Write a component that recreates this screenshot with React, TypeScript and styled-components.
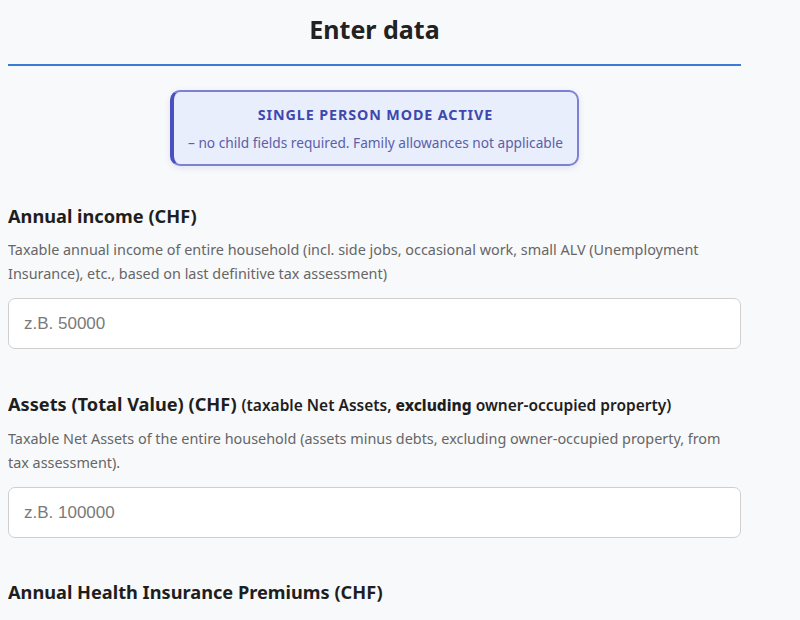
import React from "react";
import styled, { createGlobalStyle } from "styled-components";

const Global = createGlobalStyle`
  html, body { margin: 0; padding: 0; background: #f8f9fb; }
  body { font-family: "Noto Sans", "Open Sans", sans-serif; color: #222; overflow: hidden; }
`;

const Page = styled.div`
  width: 733px;
  margin-left: 8px;
  height: 620px;
  overflow: hidden;
`;

const Title = styled.h2`
  margin: 0;
  padding-top: 11px;
  text-align: center;
  font-size: 25px;
  font-weight: 700;
  color: #222;
  border-bottom: 2px solid #3a7bd5;
  line-height: 36px;
  box-sizing: border-box;
  height: 66px;
`;

const NoticeWrap = styled.div`
  display: flex;
  justify-content: center;
  margin-top: 24px;
`;

const Notice = styled.div`
  width: 409px;
  box-sizing: border-box;
  height: 76px;
  background: #e9eefd;
  border: 2px solid #7d81d2;
  border-left: 4px solid #4b50c0;
  border-radius: 10px;
  display: flex;
  flex-direction: column;
  align-items: center;
  justify-content: center;
  gap: 9px;
  box-shadow: 0 2px 6px rgba(60, 70, 160, 0.12);
`;

const NoticeTitle = styled.div`
  font-size: 14.3px;
  font-weight: 700;
  letter-spacing: 0.9px;
  color: #3e48ad;
`;

const NoticeText = styled.div`
  font-size: 13.7px;
  color: #5b60a8;
`;

const Field = styled.div<{ $top: number }>`
  margin-top: ${(p) => p.$top}px;
`;

const Label = styled.div`
  font-size: 18.2px;
  font-weight: 700;
  color: #1e1e1e;
  line-height: 24px;
`;

const LabelNote = styled.span`
  font-size: 15.5px;
  font-weight: 600;
`;

const LabelStrong = styled.b`
  font-weight: 800;
`;

const Desc = styled.div`
  margin-top: 10px;
  max-width: 725px;
  font-size: 14.4px;
  line-height: 24px;
  color: #666;
`;

const Input = styled.input`
  display: block;
  box-sizing: border-box;
  width: 100%;
  height: 51px;
  margin-top: 12px;
  border: 1.5px solid #cfcfcf;
  border-radius: 7px;
  background: #fff;
  padding: 0 15px;
  font-family: "Liberation Sans", Arial, sans-serif;
  font-size: 17px;
  color: #333;
  outline: none;
  &::placeholder { color: #7a7a7a; }
`;

export default function App() {
  return (
    <>
      <Global />
      <Page>
        <Title>Enter data</Title>
        <NoticeWrap>
          <Notice>
            <NoticeTitle>SINGLE PERSON MODE ACTIVE</NoticeTitle>
            <NoticeText>– no child fields required. Family allowances not applicable</NoticeText>
          </Notice>
        </NoticeWrap>
        <Field $top={38}>
          <Label>Annual income (CHF)</Label>
          <Desc>
            Taxable annual income of entire household (incl. side jobs, occasional work, small ALV (Unemployment
            Insurance), etc., based on last definitive tax assessment)
          </Desc>
          <Input placeholder="z.B. 50000" />
        </Field>
        <Field $top={43}>
          <Label>
            Assets (Total Value) (CHF){" "}
            <LabelNote>
              (taxable Net Assets, <LabelStrong>excluding</LabelStrong> owner-occupied property)
            </LabelNote>
          </Label>
          <Desc>
            Taxable Net Assets of the entire household (assets minus debts, excluding owner-occupied property, from
            tax assessment).
          </Desc>
          <Input placeholder="z.B. 100000" />
        </Field>
        <Field $top={42}>
          <Label>Annual Health Insurance Premiums (CHF)</Label>
          <Desc>
            Total annual net premiums of the entire household for basic health insurance, excluding subsidies
          </Desc>
        </Field>
      </Page>
    </>
  );
}
